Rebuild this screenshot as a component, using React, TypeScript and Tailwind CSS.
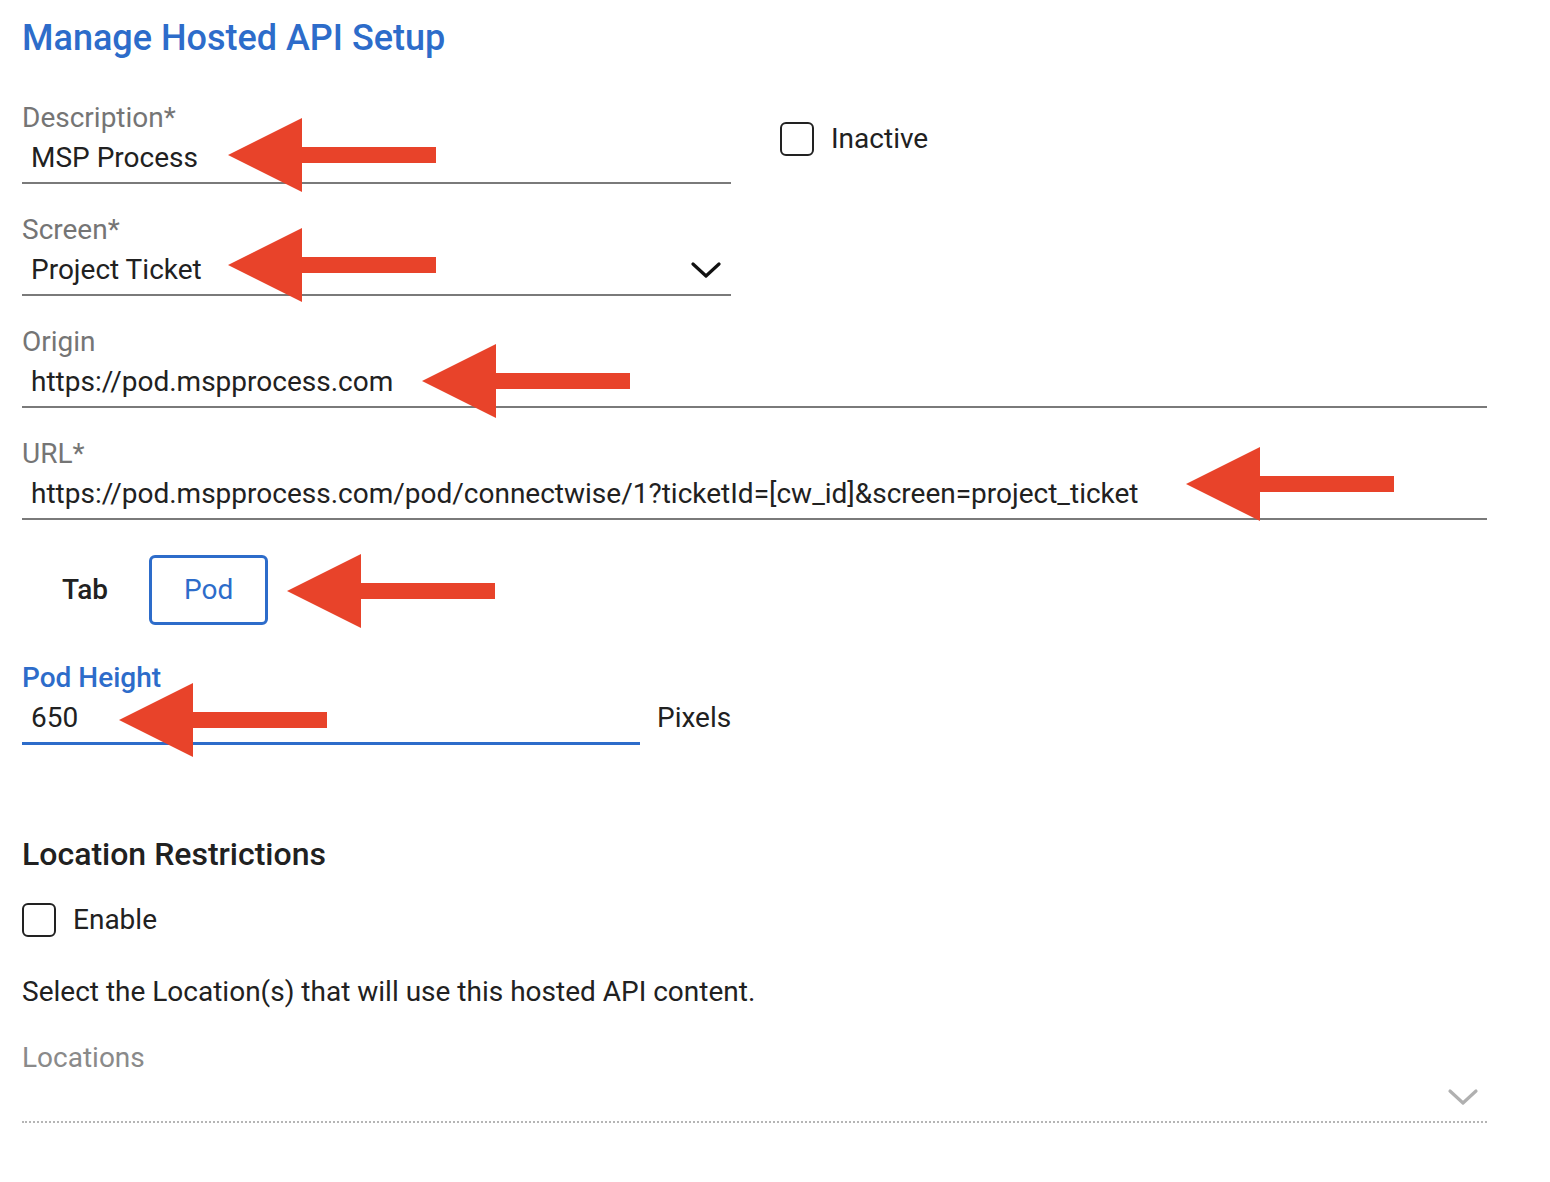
import React from "react";

const arrows: [number, number][] = [
  [228, 155],
  [228, 265],
  [422, 381],
  [1186, 484],
  [287, 591],
  [119, 720],
];

function arrowPoints(tx: number, ty: number) {
  const b = tx + 74;
  const e = tx + 208;
  return `${tx},${ty} ${b},${ty - 37} ${b},${ty - 8} ${e},${ty - 8} ${e},${ty + 8} ${b},${ty + 8} ${b},${ty + 37}`;
}

function Field({
  label,
  value,
  chevron,
  className,
}: {
  label: string;
  value: string;
  chevron?: boolean;
  className?: string;
}) {
  return (
    <div className={className}>
      <div className="text-[28px] leading-[30px] text-[#757575]">{label}</div>
      <div className="mt-[8px] flex items-center justify-between border-b-2 border-[#7a7a7a] pb-[8px] pl-[9px] pr-[10px] pt-[1px]">
        <span className="text-[28px] leading-[32px] text-[#212121]">{value}</span>
        {chevron && (
          <svg width="30" height="18" viewBox="0 0 30 18">
            <polyline points="2,3 15,15 28,3" fill="none" stroke="#111" strokeWidth="3.2" strokeLinecap="round" strokeLinejoin="round" />
          </svg>
        )}
      </div>
    </div>
  );
}

function Checkbox() {
  return <div className="h-[34px] w-[34px] rounded-[6px] border-2 border-[#222]" />;
}

export default function App() {
  return (
    <div
      className="relative min-h-[1182px] w-[1550px] bg-white pl-[22px] pt-[18px]"
      style={{ fontFamily: "Roboto, 'Liberation Sans', sans-serif" }}
    >
      <h1 className="text-[36px] font-medium leading-[40px] text-[#2d6cca]">Manage Hosted API Setup</h1>

      <div className="mt-[45px] flex items-start">
        <Field label="Description*" value="MSP Process" className="w-[709px]" />
        <div className="ml-[49px] mt-[19px] flex items-center gap-[17px]">
          <Checkbox />
          <span className="text-[28px] leading-[32px] text-[#212121]">Inactive</span>
        </div>
      </div>

      <Field label="Screen*" value="Project Ticket" chevron className="mt-[31px] w-[709px]" />
      <Field label="Origin" value="https://pod.mspprocess.com" className="mt-[31px] w-[1465px]" />
      <Field
        label="URL*"
        value="https://pod.mspprocess.com/pod/connectwise/1?ticketId=[cw_id]&screen=project_ticket"
        className="mt-[31px] w-[1465px]"
      />

      <div className="mt-[35px] flex items-center">
        <span className="ml-[40px] text-[28px] font-medium leading-[32px] text-[#212121]">Tab</span>
        <div className="ml-[41px] flex h-[70px] w-[119px] items-center justify-center rounded-[6px] border-[3px] border-[#2d6cca] text-[28px] text-[#2d6cca]">
          Pod
        </div>
      </div>

      <div className="mt-[38px] flex items-end">
        <div className="w-[618px]">
          <div className="text-[28px] font-medium leading-[30px] text-[#2d6cca]">Pod Height</div>
          <div className="mt-[8px] border-b-[3px] border-[#2d6cca] pb-[8px] pl-[9px] pt-[1px]">
            <span className="text-[28px] leading-[32px] text-[#212121]">650</span>
          </div>
        </div>
        <span className="mb-[11px] ml-[17px] text-[28px] leading-[32px] text-[#212121]">Pixels</span>
      </div>

      <h2 className="mt-[91px] text-[32px] font-medium leading-[36px] text-[#212121]">Location Restrictions</h2>

      <div className="mt-[31px] flex items-center gap-[17px]">
        <Checkbox />
        <span className="text-[28px] leading-[32px] text-[#212121]">Enable</span>
      </div>

      <p className="mt-[39px] text-[28px] leading-[32px] text-[#212121]">
        Select the Location(s) that will use this hosted API content.
      </p>

      <div className="mt-[35px] w-[1465px]">
        <div className="text-[28px] leading-[30px] text-[#8a8a8a]">Locations</div>
        <div className="mt-[8px] flex h-[42px] items-center justify-end border-b-2 border-dotted border-[#b5b5b5] pb-[8px] pr-[8px]">
          <svg width="32" height="20" viewBox="0 0 32 20">
            <polyline points="3,4 16,16 29,4" fill="none" stroke="#b0b0b0" strokeWidth="3.2" strokeLinecap="round" strokeLinejoin="round" />
          </svg>
        </div>
      </div>

      <svg className="pointer-events-none absolute left-0 top-0" width="1550" height="1182">
        {arrows.map(([x, y], i) => (
          <polygon key={i} points={arrowPoints(x, y)} fill="#e8432a" />
        ))}
      </svg>
    </div>
  );
}
